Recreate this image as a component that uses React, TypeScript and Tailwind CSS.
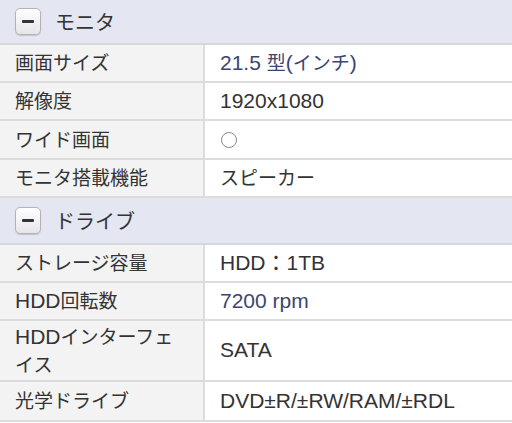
import React from "react";

const isCJK = (ch: string) => /[\u3000-\u30ff\u4e00-\u9fff\uff00-\uffef]/.test(ch) && ch !== "\uff1a";

function MixedText({ text }: { text: string }) {
  const runs: { cjk: boolean; s: string }[] = [];
  for (const ch of text) {
    const c = isCJK(ch);
    const last = runs[runs.length - 1];
    if (last && last.cjk === c) last.s += ch;
    else runs.push({ cjk: c, s: ch });
  }
  return (
    <>
      {runs.map((r, i) =>
        r.cjk ? (
          <span key={i} className="text-[19px] [font-family:'Noto_Sans_CJK_JP',sans-serif]">
            {r.s}
          </span>
        ) : (
          <span key={i} className="text-[21px] [font-family:'Liberation_Sans','Noto_Sans_CJK_JP',sans-serif]">
            {r.s}
          </span>
        )
      )}
    </>
  );
}

function Header({ title, h }: { title: string; h: string }) {
  return (
    <div className={`flex items-center bg-[#e4e6f1] border-b-2 border-[#d6d7dd] pl-[15px] ${h}`}>
      <div className="w-[26px] h-[27px] rounded-[5px] border border-[#b4b4b8] bg-gradient-to-b from-white to-[#e6e6ea] shadow-[0_1px_1px_rgba(0,0,0,0.15)] flex items-center justify-center">
        <div className="w-[12px] h-[3px] bg-[#333] rounded-[1px]" />
      </div>
      <div className="ml-[14px] text-[20px] text-[#333] [font-family:'Noto_Sans_CJK_JP',sans-serif] leading-none">
        {title}
      </div>
    </div>
  );
}

function Row({
  label,
  value,
  h,
  blue,
  circle,
}: {
  label: string;
  value?: string;
  h: string;
  blue?: boolean;
  circle?: boolean;
}) {
  return (
    <div className={`flex border-b-2 border-[#dcdcdc] ${h}`}>
      <div className="w-[205px] shrink-0 bg-[#f3f3f3] border-r-2 border-[#dcdcdc] pl-[15px] pr-[26px] flex items-center text-[#333] leading-[26px]">
        <div>
          <MixedText text={label} />
        </div>
      </div>
      <div className={`flex-1 bg-white pl-[15px] flex items-center leading-[26px] ${blue ? "text-[#3b4670]" : "text-[#333]"}`}>
        {circle ? (
          <div className="ml-[1px] w-[16px] h-[16px] rounded-full border-[1.5px] border-[#8a8a8a]" />
        ) : (
          <div>
            <MixedText text={value || ""} />
          </div>
        )}
      </div>
    </div>
  );
}

export default function App() {
  return (
    <div className="w-[512px] h-[423px] overflow-hidden bg-white">
      <Header title="モニタ" h="h-[45px]" />
      <Row label="画面サイズ" value="21.5 型(インチ)" h="h-[38px]" blue />
      <Row label="解像度" value="1920x1080" h="h-[38px]" />
      <Row label="ワイド画面" h="h-[39px]" circle />
      <Row label="モニタ搭載機能" value="スピーカー" h="h-[38px]" />
      <Header title="ドライブ" h="h-[47px]" />
      <Row label="ストレージ容量" value="HDD：1TB" h="h-[38px]" />
      <Row label="HDD回転数" value="7200 rpm" h="h-[38px]" blue />
      <Row label="HDDインターフェイス" value="SATA" h="h-[61px]" />
      <Row label="光学ドライブ" value="DVD±R/±RW/RAM/±RDL" h="h-[40px]" />
    </div>
  );
}
